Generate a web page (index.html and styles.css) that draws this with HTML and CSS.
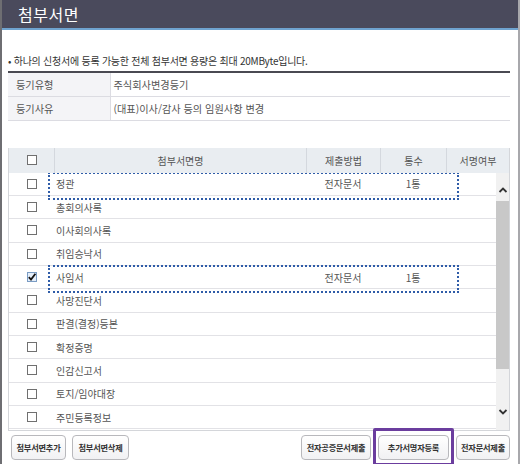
FILE: index.html
```html
<!DOCTYPE html>
<html lang="ko">

<head>
    <meta charset="UTF-8">
    <title>첨부서면</title>
    <link rel="stylesheet" href="styles.css">
</head>

<body>
    <div class="window">
        <div class="title-bar">첨부서면</div>

        <div class="content">
            <p class="note">• 하나의 신청서에 등록 가능한 전체 첨부서면 용량은 최대 20MByte입니다.</p>

            <table class="info">
                <tr>
                    <th>등기유형</th>
                    <td>주식회사변경등기</td>
                </tr>
                <tr>
                    <th>등기사유</th>
                    <td>(대표)이사/감사 등의 임원사항 변경</td>
                </tr>
            </table>

            <div class="grid">
                <div class="grid-head">
                    <div class="cell chk"><span class="box"></span></div>
                    <div class="cell">첨부서면명</div>
                    <div class="cell">제출방법</div>
                    <div class="cell">통수</div>
                    <div class="cell">서명여부</div>
                </div>

                <div class="grid-body">
                    <div class="rows">
                        <div class="row focus">
                            <div class="chk"><span class="box"></span></div>
                            <div class="name">정관</div>
                            <div class="mid">전자문서</div>
                            <div class="mid">1통</div>
                            <div></div>
                        </div>
                        <div class="row">
                            <div class="chk"><span class="box"></span></div>
                            <div class="name">총회의사록</div>
                            <div></div><div></div><div></div>
                        </div>
                        <div class="row">
                            <div class="chk"><span class="box"></span></div>
                            <div class="name">이사회의사록</div>
                            <div></div><div></div><div></div>
                        </div>
                        <div class="row">
                            <div class="chk"><span class="box"></span></div>
                            <div class="name">취임승낙서</div>
                            <div></div><div></div><div></div>
                        </div>
                        <div class="row focus">
                            <div class="chk">
                                <span class="box checked">
                                    <svg width="10" height="10" viewBox="0 0 10 10">
                                        <path d="M1.8 5.2 L4 7.6 L8.4 1.8" fill="none" stroke="#111" stroke-width="1.8"/>
                                    </svg>
                                </span>
                            </div>
                            <div class="name">사임서</div>
                            <div class="mid">전자문서</div>
                            <div class="mid">1통</div>
                            <div></div>
                        </div>
                        <div class="row">
                            <div class="chk"><span class="box"></span></div>
                            <div class="name">사망진단서</div>
                            <div></div><div></div><div></div>
                        </div>
                        <div class="row">
                            <div class="chk"><span class="box"></span></div>
                            <div class="name">판결(결정)등본</div>
                            <div></div><div></div><div></div>
                        </div>
                        <div class="row">
                            <div class="chk"><span class="box"></span></div>
                            <div class="name">확정증명</div>
                            <div></div><div></div><div></div>
                        </div>
                        <div class="row">
                            <div class="chk"><span class="box"></span></div>
                            <div class="name">인감신고서</div>
                            <div></div><div></div><div></div>
                        </div>
                        <div class="row">
                            <div class="chk"><span class="box"></span></div>
                            <div class="name">토지/임야대장</div>
                            <div></div><div></div><div></div>
                        </div>
                        <div class="row">
                            <div class="chk"><span class="box"></span></div>
                            <div class="name">주민등록정보</div>
                            <div></div><div></div><div></div>
                        </div>
                    </div>

                    <div class="scrollbar">
                        <svg class="arrow" width="12" height="12" viewBox="0 0 12 12">
                            <path d="M2.5 8 L6 4.5 L9.5 8" fill="none" stroke="#333" stroke-width="1.8"/>
                        </svg>
                        <div class="track">
                            <div class="thumb"></div>
                        </div>
                        <svg class="arrow" width="12" height="12" viewBox="0 0 12 12">
                            <path d="M2.5 4 L6 7.5 L9.5 4" fill="none" stroke="#333" stroke-width="1.8"/>
                        </svg>
                    </div>
                </div>
            </div>

            <div class="buttons">
                <div class="group">
                    <button class="btn w55">첨부서면추가</button>
                    <button class="btn w57">첨부서면삭제</button>
                </div>
                <div class="group">
                    <button class="btn w70">전자공증문서제출</button>
                    <button class="btn w71 marked">추가서명자등록</button>
                    <button class="btn w54">전자문서제출</button>
                </div>
            </div>
        </div>
    </div>
</body>

</html>
```

FILE: styles.css
```css
* {
    box-sizing: border-box;
}

body {
    margin: 0;
    padding: 0;
    background-color: #ffffff;
    font-family: "Noto Sans CJK KR", "Noto Sans", sans-serif;
    color: #555555;
}

.window {
    width: 520px;
    height: 464px;
    border-left: 2px solid #6e6e72;
    border-right: 2px solid #a8a8ac;
    overflow: hidden;
}

.title-bar {
    height: 30px;
    background-color: #4a4a5c;
    border-bottom: 2px solid #6fa3cf;
    color: #ffffff;
    font-size: 16px;
    line-height: 28px;
    padding-left: 16px;
    letter-spacing: 0.5px;
}

.content {
    padding: 0 8px 0 6px;
}

.note {
    margin: 24px 0 3px 0;
    font-size: 10px;
    line-height: 14px;
    color: #333333;
    letter-spacing: -0.25px;
}

/* 등기 정보 */
.info {
    width: 502px;
    border-collapse: collapse;
    border-top: 2px solid #4a4a52;
    font-size: 10.2px;
}

.info th,
.info td {
    height: 24px;
    padding: 0 0 0 3px;
    border-bottom: 1px solid #dcdce2;
    font-weight: normal;
    text-align: left;
    color: #555555;
}

.info th {
    width: 102px;
    padding-left: 8px;
    background-color: #f4f4f7;
    border-right: 1px solid #dcdce2;
}

/* 첨부서면 목록 */
.grid {
    margin-top: 27px;
    width: 502px;
    border: 1px solid #d4d6da;
    border-top: none;
}

.grid-head {
    display: grid;
    grid-template-columns: 45px 252px 74px 66px 1fr;
    height: 25px;
    background-color: #e9edf1;
    font-size: 10px;
}

.grid-head .cell {
    display: flex;
    align-items: center;
    justify-content: center;
    border-left: 1px solid #d4d8de;
}

.grid-head .cell:first-child {
    border-left: none;
}

.grid-body {
    display: flex;
    height: 257px;
    overflow: hidden;
}

.rows {
    flex: 1;
}

.row {
    display: grid;
    grid-template-columns: 45px 252px 74px 66px 1fr;
    height: 23.35px;
    border-bottom: 1px solid #e2e2e6;
    font-size: 10px;
    position: relative;
}

.row > div {
    display: flex;
    align-items: center;
}

.row .name {
    padding-left: 2px;
}

.row .mid {
    justify-content: center;
}

.chk {
    display: flex;
    align-items: center;
    justify-content: center;
}

.box {
    display: block;
    width: 10px;
    height: 10px;
    border: 1px solid #707070;
    background-color: #ffffff;
}

.box.checked {
    border-color: #7a9cc4;
    background-color: #e4eefa;
    position: relative;
}

.box.checked svg {
    position: absolute;
    left: -1px;
    top: -1px;
}

.row.focus::after {
    content: "";
    position: absolute;
    left: 39px;
    top: -1px;
    width: 407px;
    height: 24px;
    border: 2px dotted #2f5ca8;
}

.scrollbar {
    width: 13px;
    display: flex;
    flex-direction: column;
    align-items: center;
    background-color: #f1f1f1;
    padding-top: 11px;
}

.scrollbar .arrow {
    flex: none;
}

.track {
    width: 13px;
    flex: 1;
    padding: 5px 0 37px 0;
}

.thumb {
    height: 100%;
    background-color: #c8c8c8;
}

.scrollbar .arrow:last-child {
    margin-bottom: 12px;
}

/* 버튼 */
.buttons {
    display: flex;
    justify-content: space-between;
    margin-top: 4px;
    padding-left: 3px;
}

.group {
    display: flex;
    gap: 6px;
}

.group + .group {
    gap: 7px;
}

.btn {
    height: 25px;
    padding: 0;
    border: 1px solid #b8b8bc;
    border-radius: 4px;
    background: linear-gradient(#ffffff, #f1f1f3);
    font-family: "Noto Sans CJK KR", "Noto Sans", sans-serif;
    font-size: 8.2px;
    font-weight: bold;
    color: #333333;
    letter-spacing: -0.2px;
    cursor: pointer;
}

.w54 { width: 54px; }
.w55 { width: 55px; }
.w57 { width: 57px; }
.w70 { width: 70px; }
.w71 { width: 71px; }

.btn.marked {
    position: relative;
}

.btn.marked::after {
    content: "";
    position: absolute;
    left: -6px;
    top: -8px;
    right: -6px;
    bottom: -7px;
    border: 3px solid #6b3d9e;
    border-radius: 2px;
}
```
